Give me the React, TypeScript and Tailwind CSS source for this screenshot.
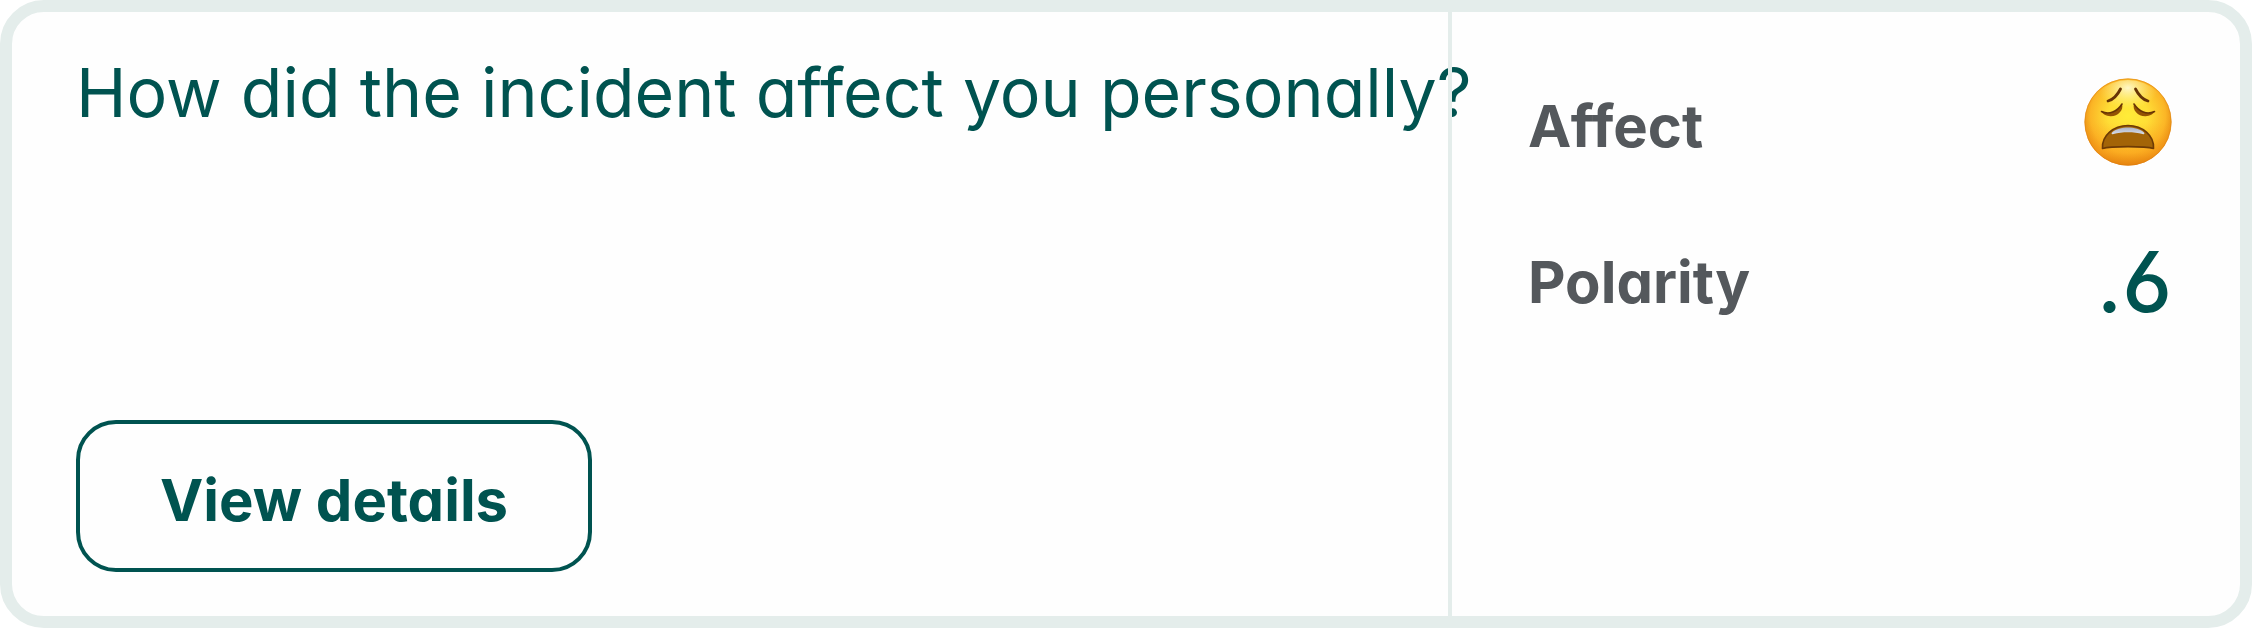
function WearyFace() {
  return (
    <svg viewBox="0 0 88 88" className="size-[88px] shrink-0" role="img" aria-labelledby="weary-title">
      <title id="weary-title">Weary</title>
      <defs>
        <radialGradient id="face" cx="44" cy="38" r="50" gradientUnits="userSpaceOnUse">
          <stop offset="0" stopColor="#ffec38" />
          <stop offset="0.4" stopColor="#ffde36" />
          <stop offset="0.75" stopColor="#fbb626" />
          <stop offset="1" stopColor="#e07a0c" />
        </radialGradient>
        <linearGradient id="shade" x1="0" y1="0" x2="0" y2="1">
          <stop offset="0.5" stopColor="#fba21c" stopOpacity="0" />
          <stop offset="0.85" stopColor="#fba21c" stopOpacity="0.5" />
          <stop offset="1" stopColor="#e8860f" stopOpacity="0.6" />
        </linearGradient>
        <radialGradient id="shine" cx="44" cy="10" r="30" gradientUnits="userSpaceOnUse" gradientTransform="matrix(1 0 0 0.7 0 3)">
          <stop offset="0" stopColor="#fffad0" stopOpacity="0.95" />
          <stop offset="1" stopColor="#fff27a" stopOpacity="0" />
        </radialGradient>
        <linearGradient id="teeth" x1="0" y1="0" x2="0" y2="1">
          <stop offset="0" stopColor="#aab2c6" />
          <stop offset="1" stopColor="#d9dde8" />
        </linearGradient>
      </defs>
      <circle cx="44" cy="44" r="43.5" fill="url(#face)" />
      <circle cx="44" cy="44" r="43.5" fill="url(#shade)" />
      <circle cx="44" cy="44" r="42" fill="url(#shine)" />
      <circle cx="44" cy="44" r="43.2" fill="none" stroke="#dd7d0c" strokeOpacity="0.5" strokeWidth="1" />
      <g fill="none" stroke="#673405" strokeWidth="2.8" strokeLinecap="round">
        <path d="M36.500 11C33.500 17 29.500 21.500 24 23" />
        <path d="M51.500 11C54.500 17 58.500 21.500 64 23" />
      </g>
      <path d="M17.500 33.500C25 37 33 34 38 26C40 32 34 38.500 26.500 38.300C22 38 18.500 36 17.500 33.500Z" fill="#935304" />
      <path d="M70.500 33.500C63 37 55 34 50 26C48 32 54 38.500 61.500 38.300C66 38 69.500 36 70.500 33.500Z" fill="#935304" />
      <path d="M17.500 33.500C25 37 33 34 38 26" fill="none" stroke="#673405" strokeWidth="1.6" strokeLinecap="round" />
      <path d="M70.500 33.500C63 37 55 34 50 26" fill="none" stroke="#673405" strokeWidth="1.6" strokeLinecap="round" />
      <path d="M18.500 70.500C17.500 58 29 47.500 44 47.500C59 47.500 70.500 58 69.500 70.500C61 68 27 68 18.500 70.500Z" fill="#a36407" stroke="#6d3a05" strokeWidth="1.6" strokeLinejoin="round" />
      <path d="M28 54.500C35 47.800 53 47.800 60 54.500C61 56 60 56.500 58.500 56C50 53.500 38 53.500 29.500 56C28 56.500 27 56 28 54.500Z" fill="url(#teeth)" />
    </svg>
  );
}

export default function App() {
  return (
    <article className="flex min-h-screen rounded-[44px] border-[12px] border-[#e4edeb] bg-[#fefefe] font-['Inter','Lato',sans-serif] text-[#005350] [font-feature-settings:'cv11','cv03','calt'_0]">
      <section className="flex min-w-0 flex-1 flex-col items-start justify-between pt-10 pb-11 pl-16">
        <h2 className="text-[68px] leading-20 whitespace-nowrap">How did the incident affect you personally?</h2>
        <button type="button" className="rounded-[40px] border-4 border-[#005350] px-20 pt-10 pb-8 text-[58px] leading-18 font-bold">
          View details
        </button>
      </section>
      <aside className="relative w-[792px] shrink-0 border-l-4 border-[#e4edeb] pt-[50px] pr-17 pl-19">
        <dl className="flex flex-col gap-9">
          <div className="flex h-30 items-center justify-between">
            <dt className="pt-2 text-[58px] leading-18 font-bold text-[#54585c]">Affect</dt>
            <dd><WearyFace /></dd>
          </div>
          <div className="flex h-30 items-center justify-between">
            <dt className="pt-2 text-[58px] leading-18 font-bold text-[#54585c]">Polarity</dt>
            <dd className="pt-2 text-[84px] leading-24 font-medium">.6</dd>
          </div>
        </dl>
      </aside>
    </article>
  );
}
